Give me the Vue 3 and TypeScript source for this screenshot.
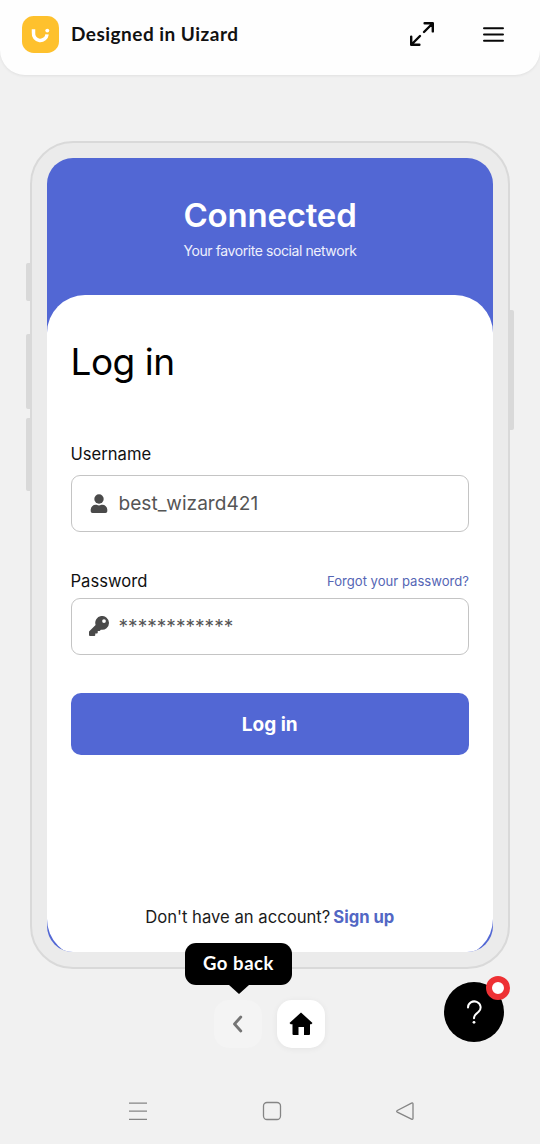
<script setup lang="ts">
import { ref } from 'vue'

const username = ref('best_wizard421')
const password = ref('************')
</script>

<template>
  <div class="page">
    <header class="topbar">
      <svg class="logo" viewBox="0 0 36 36" aria-hidden="true">
        <rect width="36" height="36" rx="11.5" fill="#fec12d" />
        <path d="M11.200 12.800v3.600a6.600 6.600 0 0 0 13.200 1.500" fill="none" stroke="#fff" stroke-width="3.400" />
        <circle cx="24.600" cy="14.200" r="1.900" fill="#fff" />
      </svg>
      <span class="brand">Designed in Uizard</span>
      <svg class="expand" viewBox="0 0 26 26" aria-hidden="true">
        <path d="M15 11 23.500 2.500M15.600 2.200h8.200v8.200M11 15 2.500 23.500M2.200 15.600v8.200h8.200" />
      </svg>
      <svg class="menu" viewBox="0 0 20 16" aria-hidden="true">
        <path d="M1 2h18M1 8h18M1 14h18" />
      </svg>
    </header>

    <main class="phone">
      <i class="side mute"></i>
      <i class="side up"></i>
      <i class="side down"></i>
      <i class="side power"></i>
      <div class="screen">
        <div class="hero">
          <h1><span>Connected</span></h1>
          <p><span>Your favorite social network</span></p>
        </div>
        <form class="panel" @submit.prevent>
          <h2><span>Log in</span></h2>
          <div class="row user-row"><label>Username</label></div>
          <div class="field">
            <svg viewBox="0 0 18 20" aria-hidden="true">
              <circle cx="9" cy="5" r="4.7" />
              <path d="M.7 17.2v-1.5a5 5 0 0 1 5-4.9c1.2 0 1.6.6 3.3.6s2.1-.6 3.3-.6a5 5 0 0 1 5 4.9v1.5q0 1.8-1.8 1.8h-13Q.7 19 .7 17.2z" />
            </svg>
            <span class="value">{{ username }}</span>
          </div>
          <div class="row pass-row">
            <label class="pass">Password</label>
            <a class="forgot">Forgot your password?</a>
          </div>
          <div class="field">
            <svg class="key" viewBox="0 0 512 512" aria-hidden="true">
              <path d="M512 176a176 176 0 0 1-208.700 173L280 376a24 24 0 0 1-18 8h-38v40a24 24 0 0 1-24 24h-40v40a24 24 0 0 1-24 24H24a24 24 0 0 1-24-24v-78a24 24 0 0 1 7-17l162-162A176 176 0 1 1 512 176zM336 128a48 48 0 1 0 96 0 48 48 0 1 0-96 0z" />
            </svg>
            <span class="value">{{ password }}</span>
          </div>
          <button class="submit"><span>Log in</span></button>
          <p class="signup"><span>Don't have an account?</span><a>Sign up</a></p>
        </form>
      </div>
    </main>

    <div class="controls">
      <button class="ctl back">
        <svg viewBox="0 0 48 48" aria-hidden="true"><path d="m26.800 17-6.300 7 6.300 7" /></svg>
        <span class="tip"><span>Go back</span></span>
      </button>
      <button class="ctl home">
        <svg viewBox="0 0 48 48" aria-hidden="true">
          <path d="M24 12.500 35.500 23 34.300 24.200H33V34q0 1-1 1h-5v-8h-5.500v8h-5q-1 0-1-1v-9.800h-1.800L12.500 23z" />
        </svg>
      </button>
    </div>

    <button class="help">
      <svg viewBox="0 0 60 60" aria-hidden="true">
        <path d="M24 25.500a6.300 6 0 1 1 10.600 4.300C31.800 32 30 33 30 36.300" />
        <circle cx="30" cy="40.300" r="1.400" />
      </svg>
      <i class="dot"></i>
    </button>

    <nav class="sysbar">
      <svg viewBox="0 0 20 20" aria-hidden="true"><path d="M1 2.200h18M1 10.200h18M1 18.400h18" /></svg>
      <svg viewBox="0 0 20 20" aria-hidden="true"><rect x="1.500" y="1.500" width="17" height="17" rx="3.500" /></svg>
      <svg viewBox="0 0 20 20" aria-hidden="true">
        <path d="M18 3v14.300q0 1.600-1.500.8L2.300 11.100q-1.300-.8 0-1.600L16.500 2.200q1.500-.7 1.500.8z" />
      </svg>
    </nav>
  </div>
</template>

<style>
body {
  margin: 0;
  background: #f1f1f1;
}
</style>

<style scoped>
* {
  box-sizing: border-box;
}
.page {
  position: relative;
  width: 540px;
  height: 1144px;
  overflow: hidden;
  background: #f1f1f1;
  color: #090909;
  font-family: Inter, "Liberation Sans", sans-serif;
  display: flex;
  flex-direction: column;
}
button {
  border: 0;
  padding: 0;
  font-family: inherit;
}
h1, h2, p {
  margin: 0;
}
span, a, label {
  white-space: nowrap;
}
.topbar {
  height: 75px;
  flex: none;
  padding: 0 36px 7px 22px;
  display: flex;
  align-items: center;
  background: #fefefe;
  border-radius: 0 0 25px 25px;
  box-shadow: 0 1px 3px rgba(0, 0, 0, 0.07);
}
.logo {
  width: 37px;
  height: 37px;
}
.brand {
  margin-left: 12px;
  font: 700 19px/26px Lato, sans-serif;
  letter-spacing: 0.48px;
  color: #111;
}
.expand {
  width: 26px;
  height: 26px;
  margin-left: auto;
  fill: none;
  stroke: #080808;
  stroke-width: 2.4;
  stroke-linecap: round;
  stroke-linejoin: round;
}
.menu {
  width: 21px;
  height: 17px;
  margin-left: 48px;
  fill: none;
  stroke: #080808;
  stroke-width: 2;
  stroke-linecap: round;
}
.phone {
  position: relative;
  flex: none;
  width: 480px;
  height: 828px;
  margin: 66px auto 0;
  padding: 15px;
  border: 2px solid #d9d9d9;
  border-radius: 43px;
  background: #ebebeb;
}
.side {
  position: absolute;
  width: 5px;
  background: #d9d9d9;
}
.mute, .up, .down {
  left: -6px;
  border-radius: 2px 0 0 2px;
}
.mute {
  top: 120px;
  height: 38px;
}
.up {
  top: 191px;
  height: 75px;
}
.down {
  top: 275px;
  height: 73px;
}
.power {
  right: -6px;
  top: 167px;
  height: 120px;
  border-radius: 0 2px 2px 0;
}
.screen {
  width: 446px;
  height: 794px;
  border-radius: 26px;
  overflow: hidden;
  background: #5267d4;
}
.hero {
  height: 137px;
  padding-top: 36px;
  text-align: center;
  color: #fff;
}
h1 {
  font-size: 33px;
  line-height: 42px;
  font-weight: 600;
  letter-spacing: -0.2px;
}
.hero p {
  margin-top: 5px;
  font-size: 14px;
  line-height: 20px;
  font-weight: 400;
  letter-spacing: -0.42px;
  color: #eef0fc;
}
.panel {
  height: 662px;
  padding: 43px 24px 0 23.500px;
  border-radius: 38px;
  background: #fff;
  display: flex;
  flex-direction: column;
}
h2 {
  font-size: 37px;
  line-height: 48px;
  font-weight: 400;
  letter-spacing: -0.5px;
  color: #000;
}
.row {
  display: flex;
  justify-content: space-between;
  align-items: center;
  height: 24px;
  font-size: 16.600px;
  color: #111;
}
.user-row {
  margin: 56px 0 9px;
}
.pass-row {
  margin: 37px 0 5px;
}
.forgot {
  font-size: 13.100px;
  color: #5566b5;
}
.field {
  height: 57px;
  flex: none;
  border: 1.500px solid #c4c4c4;
  border-radius: 9px;
  padding-left: 18.500px;
  display: flex;
  align-items: center;
}
.field svg {
  width: 18px;
  height: 20px;
  fill: #4a4a4a;
}
.field .key {
  width: 20px;
  height: 20px;
  margin: -2px -1px 0;
}
.value {
  margin-left: 10.500px;
  padding-bottom: 2px;
  font-size: 19.100px;
  color: #555;
}
.submit {
  flex: none;
  height: 62px;
  margin-top: 38px;
  border-radius: 10px;
  background: #5267d4;
  color: #fff;
  font-size: 19px;
  font-weight: 700;
}
.signup {
  margin-top: 150px;
  display: flex;
  justify-content: center;
  gap: 3px;
  font-size: 16.650px;
  line-height: 24px;
  color: #1b1b1b;
}
.signup a {
  font-weight: 700;
  color: #5267c4;
}
.controls {
  display: flex;
  gap: 15px;
  margin: 31px 0 0 214px;
}
.ctl {
  position: relative;
  width: 48px;
  height: 48px;
  border-radius: 15px;
}
.ctl svg {
  display: block;
  width: 48px;
  height: 48px;
}
.back {
  background: #f4f4f4;
}
.back svg {
  fill: none;
  stroke: #757575;
  stroke-width: 2.8;
  stroke-linecap: round;
  stroke-linejoin: round;
}
.home {
  background: #fff;
  box-shadow: 0 1px 6px rgba(0, 0, 0, 0.06);
}
.home svg {
  fill: #000;
}
.tip {
  position: absolute;
  left: -29px;
  top: -57px;
  width: 107px;
  height: 42px;
  border-radius: 11px;
  background: #000;
  color: #fff;
  text-align: center;
  font: 700 18.500px/41px Lato, sans-serif;
  letter-spacing: 0.55px;
}
.tip::after {
  content: "";
  position: absolute;
  left: 43.500px;
  top: 41.500px;
  border: 10px solid transparent;
  border-top: 9px solid #000;
  border-bottom: 0;
}
.help {
  position: absolute;
  left: 444px;
  top: 982px;
  width: 60px;
  height: 60px;
  border-radius: 50%;
  background: #000;
}
.help svg {
  display: block;
  width: 60px;
  height: 60px;
  fill: none;
  stroke: #fff;
  stroke-width: 2;
  stroke-linecap: round;
}
.help circle {
  fill: #fff;
  stroke: none;
}
.dot {
  position: absolute;
  left: 42px;
  top: -6px;
  width: 24px;
  height: 24px;
  border-radius: 50%;
  border: 6px solid #ee3134;
  background: #fff;
}
.sysbar {
  display: flex;
  justify-content: space-between;
  width: 287px;
  margin: 52px 0 0 128px;
}
.sysbar svg {
  width: 20px;
  height: 20px;
  margin-top: 1px;
  fill: none;
  stroke: #858585;
  stroke-width: 1.300;
}
</style>
